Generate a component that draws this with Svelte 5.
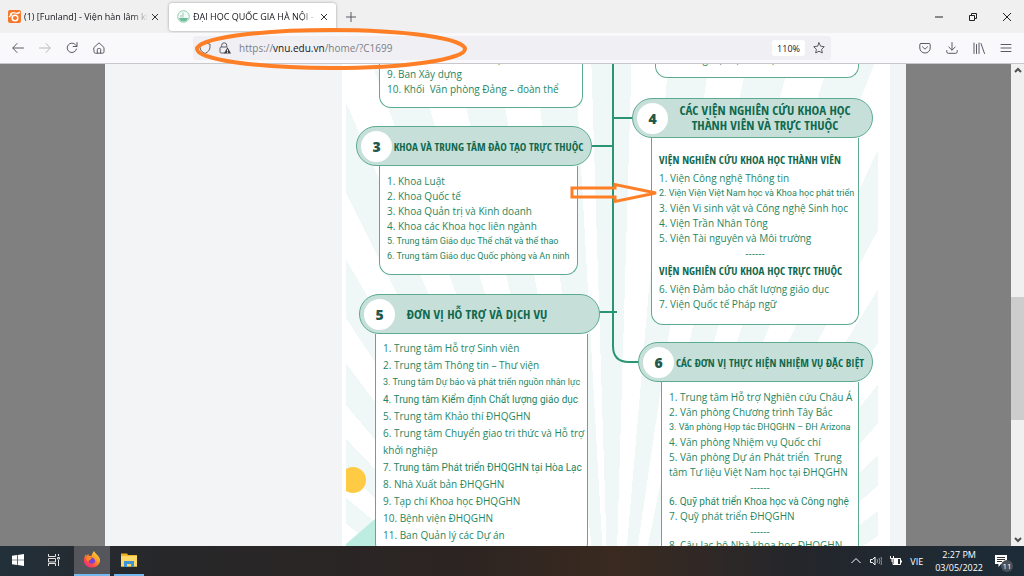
<script>
  const tabs = [
    { id: 'funland', title: '(1) [Funland] - Viện hàn lâm kho', active: false },
    { id: 'vnu', title: 'ĐẠI HỌC QUỐC GIA HÀ NỘI - T', active: true },
  ];

  // x / y sind Positionen auf der Poster-Fläche
  // fit: 'snug' / 'tight' = lange Zeilen, die sonst nicht in den Kasten passen
  const nodes = [
    {
      id: 'ban', x: 37, y: -20, width: 204, inset: 0, outset: 0,
      items: [
        { text: '8. Ban Tổ chức và cán bộ' },
        { text: '9. Ban Xây dựng' },
        { text: '10. Khối  Văn phòng Đảng – đoàn thể' },
      ],
    },
    {
      id: 'truong', x: 313, y: -20, width: 204, inset: 0, outset: 0,
      items: [{ text: '8. Trường Đại học Y Dược' }],
    },
    {
      id: 'khoa', no: 3, title: ['KHOA VÀ TRUNG TÂM ĐÀO TẠO TRỰC THUỘC'], tight: true,
      x: 14, y: 62, width: 236, inset: 23, outset: 14,
      items: [
        { text: '1. Khoa Luật' },
        { text: '2. Khoa Quốc tế' },
        { text: '3. Khoa Quản trị và Kinh doanh' },
        { text: '4. Khoa các Khoa học liên ngành' },
        { text: '5. Trung tâm Giáo dục Thể chất và thể thao', fit: 'tight' },
        { text: '6. Trung tâm Giáo dục Quốc phòng và An ninh', fit: 'tight' },
      ],
    },
    {
      id: 'vien', no: 4, title: ['CÁC VIỆN NGHIÊN CỨU KHOA HỌC', 'THÀNH VIÊN VÀ TRỰC THUỘC'],
      x: 290, y: 34, width: 241, inset: 19, outset: 14,
      items: [
        { heading: 'VIỆN NGHIÊN CỨU KHOA HỌC THÀNH VIÊN' },
        { text: '1. Viện Công nghệ Thông tin' },
        { text: '2. Viện Viện Việt Nam học và Khoa học phát triển', fit: 'tight' },
        { text: '3. Viện Vi sinh vật và Công nghệ Sinh học' },
        { text: '4. Viện Trần Nhân Tông' },
        { text: '5. Viện Tài nguyên và Môi trường' },
        { rule: true },
        { heading: 'VIỆN NGHIÊN CỨU KHOA HỌC TRỰC THUỘC' },
        { text: '6. Viện Đảm bảo chất lượng giáo dục' },
        { text: '7. Viện Quốc tế Pháp ngữ' },
      ],
    },
    {
      id: 'donvi', no: 5, title: ['ĐƠN VỊ HỖ TRỢ VÀ DỊCH VỤ'],
      x: 17, y: 230, width: 241, inset: 16, outset: 12,
      items: [
        { text: '1. Trung tâm Hỗ trợ Sinh viên' },
        { text: '2. Trung tâm Thông tin – Thư viện' },
        { text: '3. Trung tâm Dự báo và phát triển nguồn nhân lực', fit: 'tight' },
        { text: '4. Trung tâm Kiểm định Chất lượng giáo dục', fit: 'snug' },
        { text: '5. Trung tâm Khảo thí ĐHQGHN' },
        { text: '6. Trung tâm Chuyển giao tri thức và Hỗ trợ' },
        { text: 'khởi nghiệp' },
        { text: '7. Trung tâm Phát triển ĐHQGHN tại Hòa Lạc', fit: 'snug' },
        { text: '8. Nhà Xuất bản ĐHQGHN' },
        { text: '9. Tạp chí Khoa học ĐHQGHN' },
        { text: '10. Bệnh viện ĐHQGHN' },
        { text: '11. Ban Quản lý các Dự án' },
      ],
    },
    {
      id: 'dacbiet', no: 6, title: ['CÁC ĐƠN VỊ THỰC HIỆN NHIỆM VỤ ĐẶC BIỆT'], tight: true,
      x: 296, y: 278, width: 235, inset: 23, outset: 14,
      items: [
        { text: '1. Trung tâm Hỗ trợ Nghiên cứu Châu Á' },
        { text: '2. Văn phòng Chương trình Tây Bắc' },
        { text: '3. Văn phòng Hợp tác ĐHQGHN – ĐH Arizona', fit: 'tight' },
        { text: '4. Văn phòng Nhiệm vụ Quốc chí' },
        { text: '5. Văn phòng Dự án Phát triển  Trung' },
        { text: 'tâm Tư liệu Việt Nam học tại ĐHQGHN' },
        { rule: true },
        { text: '6. Quỹ phát triển Khoa học và Công nghệ', fit: 'snug' },
        { text: '7. Quỹ phát triển ĐHQGHN' },
        { rule: true },
        { text: '8. Câu lạc bộ Nhà khoa học ĐHQGHN' },
      ],
    },
  ];

  let url = $state('https://vnu.edu.vn/home/?C1699');
  let parts = $derived(url.match(/^(https?:\/\/)([^/]+)(.*)$/) ?? ['', '', url, '']);
</script>

<div class="screen">
  <!-- Tabs -->
  <header class="tabbar">
    {#each tabs as tab (tab.id)}
      <div class="tab" class:active={tab.active}>
        {#if tab.id === 'funland'}
          <svg class="fav" viewBox="0 0 13 13">
            <rect width="13" height="13" rx="2" fill="#f4772b" />
            <circle cx="7" cy="8" r="2.8" fill="none" stroke="#fff" stroke-width="1.5" />
            <path d="M2 4.5q2-2.500 5-1.500T12 2M1 7l3-2.500" fill="none" stroke="#fff" stroke-width="1.300" />
          </svg>
        {:else}
          <svg class="fav" viewBox="0 0 13 13">
            <circle cx="6.500" cy="6.500" r="5.800" fill="#f5fbf8" stroke="#8ecbb0" />
            <path d="M2 8h9q-1 3.500-4.500 3.500T2 8z" fill="#6cbd97" /><path d="M6 2.500v5M4 5v2.500" stroke="#8ecbb0" />
          </svg>
        {/if}
        <span class="tab-title">{tab.title}</span>
        <button class="tab-close" aria-label="Close tab">
          <svg viewBox="0 0 8 8"><path d="M1 1l6 6M7 1L1 7" /></svg>
        </button>
      </div>
    {/each}
    <button class="icon-btn plus" aria-label="New tab">
      <svg viewBox="0 0 10 10"><path d="M5 0v10M0 5h10" /></svg>
    </button>
    <div class="win-btns">
      <button aria-label="Minimize"><svg viewBox="0 0 10 10"><path d="M1 5h8" /></svg></button>
      <button aria-label="Restore"><svg viewBox="0 0 10 10"><path d="M1.500 3.500h5v5h-5zM3.500 3V1.500h5v5H7" /></svg></button>
      <button aria-label="Close"><svg viewBox="0 0 10 10"><path d="M1 1l8 8M9 1L1 9" /></svg></button>
    </div>
  </header>

  <!-- Navigation -->
  <nav class="navbar">
    <div class="nav-left">
      <button class="icon-btn" aria-label="Back"><svg viewBox="0 0 12 12"><path d="M11.500 6H1M5 1.500L.8 6 5 10.500" /></svg></button>
      <button class="icon-btn dim" aria-label="Forward"><svg viewBox="0 0 12 12"><path d="M.5 6H11M7 1.500L11.200 6 7 10.500" /></svg></button>
      <button class="icon-btn" aria-label="Reload"><svg viewBox="0 0 12 12"><path d="M10.500 7A4.700 4.700 0 1 1 9.500 2.800L11 4.200M11 .5v4H7.200" /></svg></button>
      <button class="icon-btn" aria-label="Home"><svg viewBox="0 0 12 12"><path d="M1 5.500L6 .8l5 4.700v4.300q0 1.400-1.400 1.400H2.400Q1 11.200 1 9.800zM4.300 11V7.500q0-1 1-1h1.400q1 0 1 1V11" /></svg></button>
    </div>
    <div class="urlbar">
      <svg class="ico" viewBox="0 0 12 12"><path d="M6 .7l5 1.500v3Q10.700 9.500 6 11.500 1.300 9.500 1 5.200v-3z" /></svg>
      <svg class="ico lock" viewBox="0 0 12 12">
        <path d="M2.700 5V3.300a2.500 2.500 0 0 1 5 0V5M6 11H2.200Q1 11 1 9.800V6.200Q1 5 2.200 5h6" />
        <path class="warn" d="M8.500 5.200L12 11.500H5z" /><path class="mark" d="M8.500 7.500v2M8.500 10.200v.8" />
      </svg>
      <a class="url" href={url}>{parts[1]}<b>{parts[2]}</b>{parts[3]}</a>
      <button class="zoom">110%</button>
      <button class="icon-btn" aria-label="Bookmark"><svg viewBox="0 0 12 12"><path d="M6 .8l1.600 3.400 3.700.5-2.700 2.600.7 3.700L6 9.200 2.700 11l.7-3.700L.7 4.700l3.700-.5z" /></svg></button>
    </div>
    <div class="nav-right">
      <button class="icon-btn" aria-label="Pocket"><svg viewBox="0 0 12 12"><path d="M2 1.500h8q1.200 0 1.200 1.200V6A5.200 5 0 0 1 .8 6V2.700Q.8 1.500 2 1.500zM3.500 4.800L6 7.200l2.500-2.400" /></svg></button>
      <button class="icon-btn" aria-label="Downloads"><svg viewBox="0 0 12 12"><path d="M6 .5V8M2.800 5L6 8.200 9.200 5M.8 8.500v1.300q0 1.500 1.500 1.500h7.400q1.500 0 1.500-1.500V8.500" /></svg></button>
      <button class="icon-btn" aria-label="Library"><svg viewBox="0 0 12 12"><path d="M1 1v10.500M3.500 2.500v9M6 1v10.500M8 1.500l3.500 10" /></svg></button>
      <button class="icon-btn" aria-label="Menu"><svg viewBox="0 0 12 12"><path d="M1 2.500h10M1 6h10M1 9.500h10" /></svg></button>
    </div>
  </nav>

  <!-- Seite -->
  <div class="view">
    <main class="page">
      <div class="poster">
        <div class="rays"></div>
        <svg class="lines" viewBox="0 0 548 482">
          <circle cx="11" cy="416" r="13" fill="#ffcb45" />
          <path d="M4 482v-2l29-25v27z" fill="#bdece1" />
          <path d="M-2 400h6v40h-6z" fill="#fff" />
          <g fill="none" stroke="#2a9473" stroke-width="2">
            <path d="M271 0v282q0 16 16 16h12" />
            <path d="M271 54h20M249 82h22M257 248h18" />
          </g>
        </svg>
        {#each nodes as node (node.id)}
          <section class="node {node.id}"
                   style:left="{node.x}px" style:top="{node.y}px" style:width="{node.width}px">
            {#if node.no}
              <h2 class="pill" class:tight={node.tight}>
                <span class="no">{node.no}</span>
                <span class="pill-title">
                  {#each node.title as line}<span>{line}</span>{/each}
                </span>
              </h2>
            {/if}
            <div class="panel" style:margin-left="{node.inset}px" style:margin-right="{node.outset}px">
              {#each node.items as item}
                {#if item.heading}
                  <h3>{item.heading}</h3>
                {:else if item.rule}
                  <p class="rule">------</p>
                {:else}
                  <p class={item.fit}>{item.text}</p>
                {/if}
              {/each}
            </div>
          </section>
        {/each}
        <svg class="arrow" viewBox="0 0 90 22">
          <path d="M3 6h43V2.500L87 11 46 19.500V15H3z" />
        </svg>
      </div>
    </main>
    <div class="scroll">
      <svg viewBox="0 0 8 8"><path d="M1 5.500l3-3 3 3" /></svg>
      <div class="track"><div class="thumb"></div></div>
      <svg viewBox="0 0 8 8"><path d="M1 2.500l3 3 3-3" /></svg>
    </div>
  </div>

  <!-- Taskbar -->
  <footer class="taskbar">
    <button class="task" aria-label="Start">
      <svg viewBox="0 0 12 12"><path d="M0 1.700l5-.7v4.700H0zM5.700.9L12 0v5.700H5.700zM0 6.300h5V11l-5-.7zM5.700 6.300H12V12l-6.300-.9z" fill="#fff" /></svg>
    </button>
    <button class="task" aria-label="Task view">
      <svg viewBox="0 0 12 12"><path d="M.5 0v2.500h7V0M.5 4.500h7v3.500h-7zM.5 12V9.500h7V12M10.500 0v2M10.500 6v6M9.500 3.500h2v1.500h-2z" fill="none" stroke="#e4e4e4" /></svg>
    </button>
    <button class="task on" aria-label="Firefox">
      <svg class="big" viewBox="0 0 18 18">
        <defs>
          <linearGradient id="fox" x1="1" y1="0" x2="0.2" y2="1">
            <stop offset="0" stop-color="#ffe44a" /><stop offset=".45" stop-color="#ff9a28" />
            <stop offset=".75" stop-color="#ff4a45" /><stop offset="1" stop-color="#e62d8b" />
          </linearGradient>
        </defs>
        <path d="M11 0q1 2 3.500 4.200Q17.500 7 17 10.500A8.200 7.500 0 0 1 .8 10Q.6 6 3 3l.6 2 1.600-2 .8 2 2.500-.2Q9 2.500 11 0z" fill="url(#fox)" />
        <path d="M6 7.500q2-1.800 5 0 2 2 .5 4.200-2.500 2-5 .3Q5 10.500 6 7.500z" fill="#7a43d6" />
        <path d="M3 6.500q3-1 6 .8L7 9q-2 0-1.500 2Q3 9.500 3 6.500z" fill="#ff8a1f" />
      </svg>
    </button>
    <button class="task run" aria-label="File Explorer">
      <svg class="big" viewBox="0 0 18 18">
        <path d="M1 2.500h6l1 1.500h9v11.500H1z" fill="#f0b429" /><path d="M1 5h16v10.500H1z" fill="#ffd968" />
        <path d="M4 16V10h10v6h-3v-3H7v3z" fill="#3e94d8" />
      </svg>
    </button>
    <div class="tray">
      <svg viewBox="0 0 12 12"><path d="M1.500 8L6 3.500 10.500 8" /></svg>
      <svg viewBox="0 0 12 12"><path d="M.5 4.500h2L5 2v8L2.500 7.500h-2z" /><path d="M7 4q1.500 2 0 4M9 3q2 3 0 6M11 2q2 4 0 8" opacity=".5" /></svg>
      <svg viewBox="0 0 12 12"><path d="M3 3.500h7.500v6H3zM11.500 5.500v2M.5 1v2.500h3V1M2 3.500V7" /><path d="M4 4h4v5H4z" fill="#fff" stroke="none" /></svg>
      <span class="lang">VIE</span>
      <time><span>2:27 PM</span><span>03/05/2022</span></time>
      <div class="note">
        <svg viewBox="0 0 12 12"><path d="M0 0h12v9H6l-2.500 3V9H0z" fill="#fff" stroke="none" /><path d="M2 2.500h8M2 4.500h8M2 6.500h5" stroke="#333" /></svg>
        <span class="badge">11</span>
      </div>
    </div>
  </footer>

  <svg class="ring" viewBox="0 0 276 44"><ellipse cx="138" cy="22" rx="134" ry="19" /></svg>
</div>

<style>
  :global(body) { margin: 0; }

  .screen {
    position: relative; display: flex; flex-direction: column;
    height: 100vh; overflow: hidden;
    font-family: 'Open Sans', 'Noto Sans', sans-serif; font-size: 10px; color: #15141a;
  }
  button { background: none; border: none; padding: 0; font: inherit; color: inherit; display: flex; align-items: center; justify-content: center; }
  svg { display: block; }
  h2, h3, p { margin: 0; }

  .tabbar { display: flex; align-items: center; gap: 2px; height: 33px; background: #f0f0f0; flex: none; }
  .tab { display: flex; align-items: center; gap: 3px; box-sizing: border-box; width: 167px; height: 28px; padding: 0 8px; border-radius: 3px; }
  .tab.active { background: #fff; box-shadow: 0 0 3px rgba(0,0,0,0.35); }
  .fav { width: 13px; height: 13px; flex: none; }
  .tab-title { flex: 1; overflow: hidden; white-space: nowrap; font-size: 9px; mask-image: linear-gradient(to left, transparent, #000 16px); }
  .tab-close svg { width: 8px; height: 8px; fill: none; stroke: #333; }
  .icon-btn svg { width: 12px; height: 12px; fill: none; stroke: #5b5b66; stroke-linejoin: round; stroke-linecap: round; }
  .icon-btn.dim { opacity: 0.4; }
  .plus { margin-left: 8px; }
  .plus svg { width: 10px; height: 10px; }
  .win-btns { display: flex; gap: 24px; margin-left: auto; padding-right: 12px; }
  .win-btns svg { width: 10px; height: 10px; fill: none; stroke: #222; }

  .navbar { display: flex; align-items: center; box-sizing: border-box; height: 31px; background: #f9f9fb; border-bottom: 1px solid #c8c8cc; flex: none; }
  .nav-left { display: flex; gap: 15px; width: 181px; padding-left: 12px; }
  .urlbar { flex: 1; display: flex; align-items: center; gap: 8px; height: 24px; padding: 0 6px; background: #f0f0f4; border-radius: 3px; }
  .ico { width: 12px; height: 12px; fill: none; stroke: #5b5b66; }
  .ico .warn { fill: #3c3c44; stroke: none; }
  .ico .mark { stroke: #fff; }
  .url { flex: 1; color: #7d7d86; text-decoration: none; }
  .url b { font-weight: 400; color: #15141a; }
  .zoom { height: 16px; padding: 0 5px; background: #fff; border-radius: 3px; font-size: 9px; }
  .nav-right { display: flex; gap: 15px; padding: 0 12px 0 88px; }

  .view { flex: 1; min-height: 0; display: flex; background: #808080; }
  .page { flex: 1; display: flex; justify-content: flex-end; margin: 0 105px; padding-right: 16px; background: #f3f4f6; overflow: hidden; }
  .poster { position: relative; width: 548px; background: #fff; overflow: hidden; }
  .rays { position: absolute; inset: 0 12px 0 4px; background: repeating-conic-gradient(from -1.8deg at 266px 656px, #eff8f6 0 3.5deg, #fff 0 6.7deg); }
  .lines { position: absolute; left: 0; top: 0; width: 548px; height: 482px; }

  .node { position: absolute; color: #1f8763; }
  .pill { display: flex; align-items: center; box-sizing: border-box; height: 40px; padding: 0 10px 0 4px; background: #c6e0d9; border: 1px solid #5cab91; border-radius: 20px; color: #10684d; }
  .pill.tight { padding-right: 6px; }
  .donvi .pill { padding-right: 40px; }
  .no { display: flex; align-items: center; justify-content: center; width: 31px; height: 31px; border-radius: 50%; background: #fff; color: #24574a; font: 800 14px 'Open Sans', sans-serif; flex: none; }
  .pill-title { flex: 1; display: flex; flex-direction: column; text-align: center; white-space: nowrap; font: 700 13px/15px 'Open Sans Condensed', 'Open Sans', sans-serif; }
  .tight .pill-title { font-size: 11px; }
  .panel { padding: 8px 7px 10px; background: #fff; border: 1px solid #5cab91; border-top: none; border-radius: 0 0 12px 12px; }
  p { font-size: 10px; line-height: 15px; white-space: pre; }
  p.snug { font-family: 'Roboto', sans-serif; }
  p.tight { font-family: 'Roboto', sans-serif; font-size: 9px; }
  p.rule { line-height: 14px; text-align: center; }
  .vien .panel { padding-top: 11px; padding-bottom: 12px; }
  .donvi .panel { padding-top: 6px; }
  .donvi p { line-height: 17px; }
  h3 { font: 700 11px/22px 'Open Sans Condensed', 'Open Sans', sans-serif; color: #10684d; white-space: nowrap; }

  .arrow { position: absolute; left: 227px; top: 118px; width: 90px; height: 22px; fill: none; stroke: #ff7f27; stroke-width: 3; }
  .ring { position: absolute; left: 193px; top: 27px; width: 276px; height: 44px; fill: none; stroke: #ff7f27; stroke-width: 4; }

  .scroll { display: flex; flex-direction: column; align-items: center; width: 13px; background: #f0f0f0; }
  .scroll svg { width: 8px; height: 13px; fill: none; stroke: #505050; stroke-width: 2; }
  .track { flex: 1; width: 100%; }
  .thumb { height: 27%; margin-top: 220px; background: #cdcdcd; }

  .taskbar { display: flex; height: 30px; flex: none; color: #fff; background: linear-gradient(90deg, #22303a, #272729 16%, #2c2422 45%, #3a2a20 60%, #24262b 78%, #1c2c38); }
  .task { width: 36px; border-bottom: 2px solid transparent; }
  .task svg { width: 12px; height: 12px; }
  .task svg.big { width: 18px; height: 18px; }
  .task.on { margin-left: 2px; background: #55565b; border-color: #76b9ed; }
  .task.run { border-color: #76b9ed; width: 30px; margin-left: 4px; }
  .tray { display: flex; align-items: center; gap: 8px; margin-left: auto; padding-right: 17px; font-size: 9px; }
  .tray svg { width: 12px; height: 12px; fill: none; stroke: #fff; }
  .tray time { display: flex; flex-direction: column; align-items: center; line-height: 13px; padding: 0 4px; }
  .note { position: relative; }
  .badge { position: absolute; left: 6px; top: 5px; width: 12px; height: 12px; line-height: 12px; text-align: center; border-radius: 50%; background: #4a5058; font-size: 8px; }
</style>
